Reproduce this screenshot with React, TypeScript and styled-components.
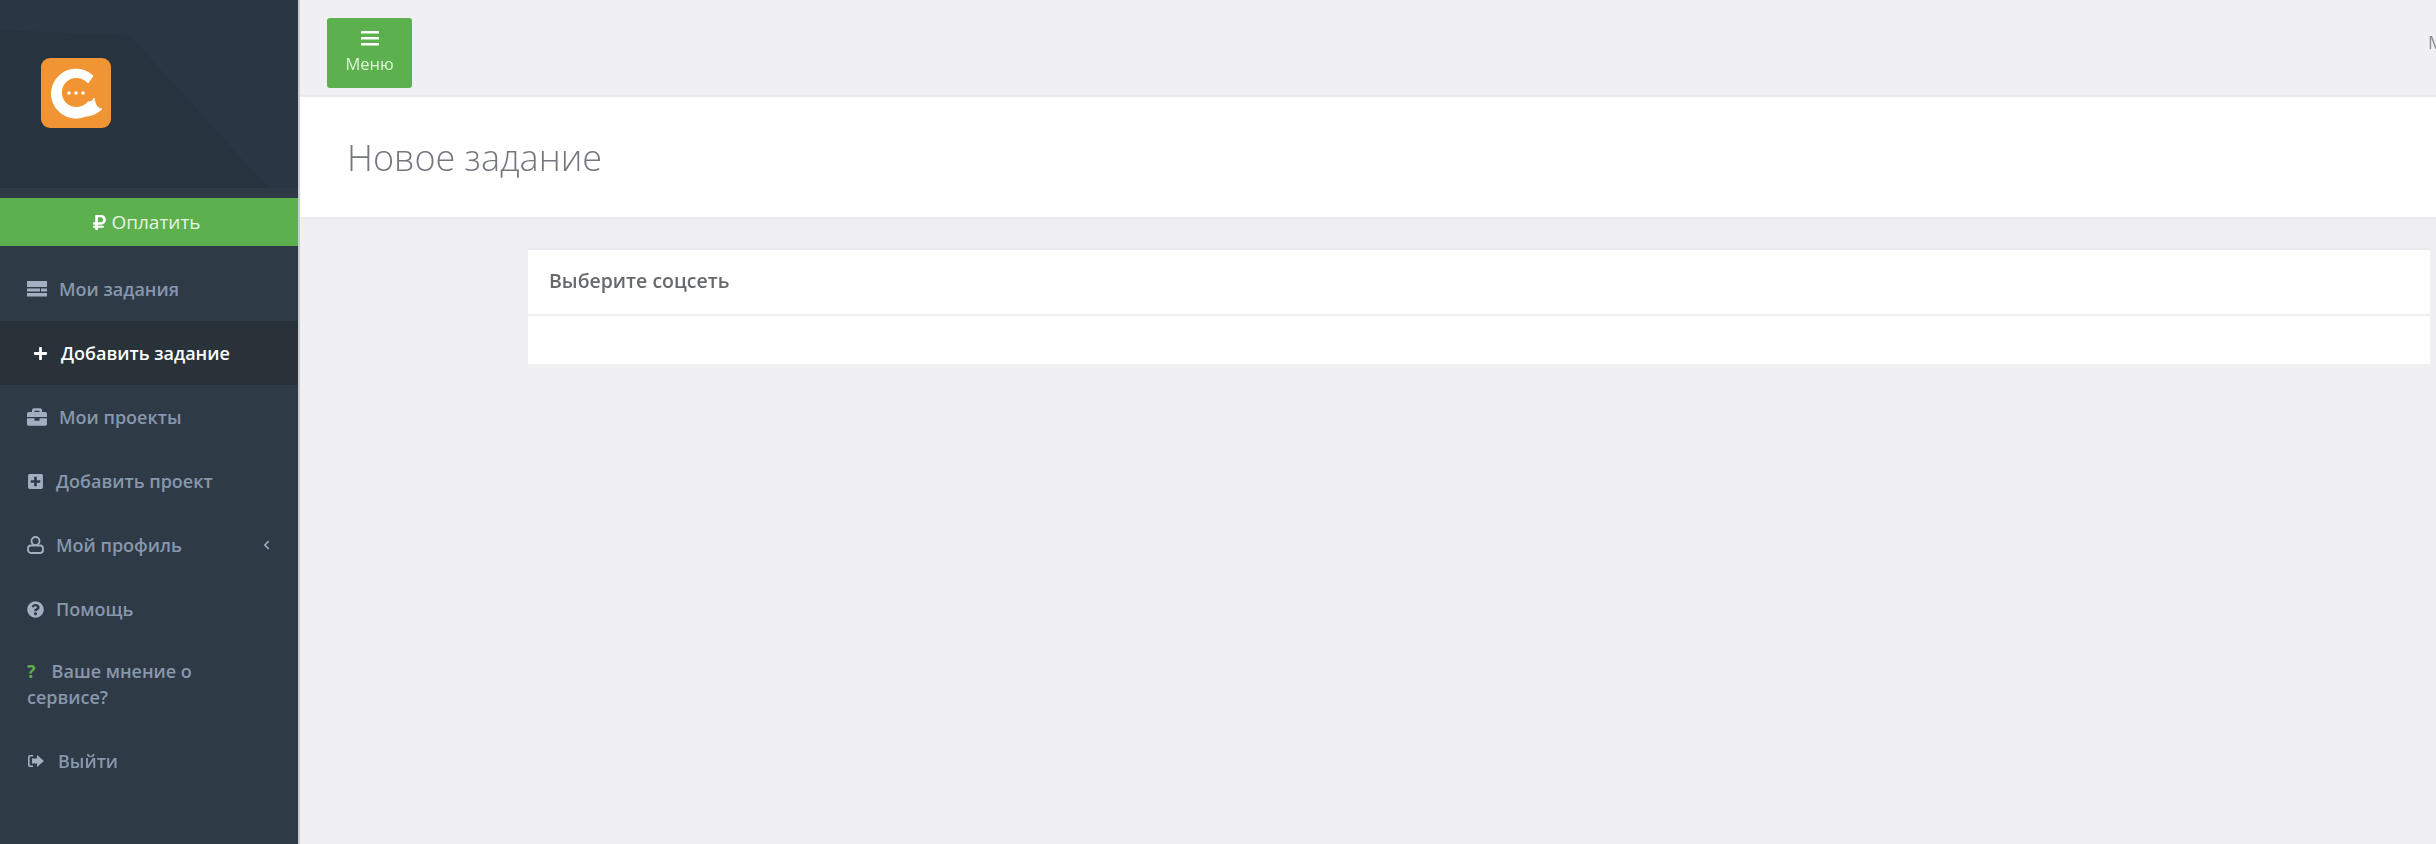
import React from 'react';
import styled, { createGlobalStyle } from 'styled-components';
import {
  FaBriefcase,
  FaPlus,
  FaPlusSquare,
  FaQuestionCircle,
  FaRubleSign,
  FaChevronLeft,
} from 'react-icons/fa';

const GlobalStyle = createGlobalStyle`
  html, body {
    margin: 0;
    padding: 0;
    height: 100%;
    overflow: hidden;
    background: #f0f0f3;
    font-family: "Open Sans", "Liberation Sans", sans-serif;
  }
  #root {
    height: 100%;
  }
`;

const Page = styled.div`
  display: flex;
  width: 2436px;
  height: 844px;
  overflow: hidden;
  filter: blur(0.6px);
`;

const Sidebar = styled.aside`
  flex: 0 0 298px;
  background: #2f3a47;
  border-right: 2px solid #c9ccd1;
  box-sizing: content-box;
  display: flex;
  flex-direction: column;
`;

const LogoArea = styled.div`
  position: relative;
  height: 188px;
  margin-bottom: 10px;
  padding: 58px 0 0 41px;
  box-sizing: border-box;
  background: #2a3643;
`;

const LogoShade = styled.div`
  position: absolute;
  inset: 0;
  background: #27333f;
  clip-path: polygon(0 30px, 130px 36px, 268px 188px, 0 188px);
`;

const LogoMark = styled.svg`
  position: relative;
  display: block;
  width: 70px;
  height: 70px;
`;

const PayBar = styled.div`
  height: 48px;
  padding-right: 5px;
  box-sizing: border-box;
  background: #5cb04e;
  color: #e6f4e2;
  font-size: 19px;
  display: flex;
  align-items: center;
  justify-content: center;
  gap: 4px;
  margin-bottom: 11px;
  svg {
    width: 15px;
    height: 17px;
    color: #ffffff;
  }
`;

const Menu = styled.nav`
  display: flex;
  flex-direction: column;
`;

const MenuItem = styled.a<{ $active?: boolean; $gap?: number }>`
  display: flex;
  align-items: center;
  gap: ${(p) => p.$gap ?? 12}px;
  height: 64px;
  padding: 0 27px;
  box-sizing: border-box;
  font-size: 18px;
  font-weight: 600;
  color: ${(p) => (p.$active ? '#ffffff' : '#8797ac')};
  background: ${(p) => (p.$active ? '#293239' : 'transparent')};
  svg {
    flex-shrink: 0;
    color: ${(p) => (p.$active ? '#ffffff' : '#a3afc0')};
  }
`;

const Caret = styled.span`
  margin-left: auto;
  display: flex;
  svg {
    width: 9px;
    height: 10px;
  }
`;

const OpinionItem = styled.a`
  display: block;
  padding: 17px 27px 19px;
  font-size: 18px;
  font-weight: 600;
  line-height: 26px;
  color: #8797ac;
`;

const OpinionMark = styled.span`
  color: #5cb04e;
  font-weight: 700;
  margin-right: 16px;
`;

const Main = styled.main`
  flex: 1;
  min-width: 0;
  display: flex;
  flex-direction: column;
`;

const TopBar = styled.header`
  height: 95px;
  flex-shrink: 0;
  padding: 18px 0 0 27px;
  box-sizing: border-box;
  display: flex;
  justify-content: space-between;
`;

const MenuButton = styled.button`
  width: 85px;
  height: 70px;
  border: 0;
  border-radius: 3px;
  padding: 13px 0 0;
  background: #5cb04e;
  color: #e0f4da;
  font-family: inherit;
  font-size: 16.5px;
  line-height: 20px;
  display: flex;
  flex-direction: column;
  align-items: center;
  gap: 8px;
`;

const BarsIcon = styled.svg`
  display: block;
  width: 18px;
  height: 15px;
`;

const CutOffLabel = styled.span`
  width: 8px;
  overflow: hidden;
  margin-top: 14px;
  font-size: 18px;
  line-height: 20px;
  color: #8a8d92;
`;

const TitlePanel = styled.div`
  height: 124px;
  flex-shrink: 0;
  box-sizing: border-box;
  background: #ffffff;
  border-top: 2px solid #e9eaed;
  border-bottom: 2px solid #e9eaed;
  display: flex;
  align-items: center;
  padding: 0 0 0 47px;
`;

const PageTitle = styled.h2`
  margin: 0;
  font-size: 36px;
  font-weight: 300;
  color: #74787e;
`;

const Content = styled.section`
  padding: 29px 6px 0 228px;
`;

const Card = styled.div`
  background: #ffffff;
  border-top: 2px solid #e9eaed;
`;

const CardHeader = styled.div`
  height: 64px;
  box-sizing: content-box;
  display: flex;
  align-items: center;
  padding-left: 21px;
  font-size: 19.5px;
  line-height: 24px;
  font-weight: 600;
  color: #676a6c;
  border-bottom: 2px solid #f0f0f3;
  span {
    margin-top: -2px;
  }
`;

const CardBody = styled.div`
  height: 48px;
`;

const TasksIcon = () => (
  <svg width="20" height="16" viewBox="0 0 20 16" fill="currentColor">
    <rect x="0" y="0" width="20" height="6" />
    <rect x="0" y="7.5" width="13" height="3" />
    <rect x="14" y="7.5" width="6" height="3" />
    <rect x="0" y="12" width="20" height="3.5" />
  </svg>
);

const UserOutlineIcon = () => (
  <svg width="17" height="18" viewBox="0 0 17 18" fill="none" stroke="currentColor" strokeWidth="1.8">
    <circle cx="8.5" cy="5" r="4" />
    <rect x="1" y="9.5" width="15" height="7.5" rx="3" />
  </svg>
);

const LogoutIcon = () => (
  <svg width="17" height="14" viewBox="0 0 17 14" fill="currentColor">
    <path d="M6 1H3a2 2 0 0 0-2 2v8a2 2 0 0 0 2 2h3v-1.6H3.4a.8.8 0 0 1-.8-.8V3.4a.8.8 0 0 1 .8-.8H6z" />
    <path d="M10 1l7 6-7 6V9.5H5v-5h5z" />
  </svg>
);

const Logo = () => (
  <LogoMark viewBox="0 0 70 70">
    <rect width="70" height="70" rx="9" fill="#f19534" />
    <path
      d="M52 18 A24.5 24.5 0 1 0 45 58 C51 58 56 55 61 51 C57 51 54 47 53 40 C52 43 50 44 47 44 A15 15 0 1 1 47 25 Z"
      fill="#ffffff"
      stroke="#ffffff"
      strokeWidth="1"
      strokeLinejoin="round"
    />
    <circle cx="28" cy="35" r="1.8" fill="#ffffff" />
    <circle cx="35" cy="35" r="1.8" fill="#ffffff" />
    <circle cx="42" cy="35" r="1.8" fill="#ffffff" />
  </LogoMark>
);

function App() {
  return (
    <>
      <GlobalStyle />
      <Page>
        <Sidebar>
          <LogoArea>
            <LogoShade />
            <Logo />
          </LogoArea>
          <PayBar>
            <FaRubleSign />
            Оплатить
          </PayBar>
          <Menu>
            <MenuItem>
              <TasksIcon />
              Мои задания
            </MenuItem>
            <MenuItem $active $gap={13}>
              <FaPlus size={15} style={{ marginLeft: 6 }} />
              Добавить задание
            </MenuItem>
            <MenuItem>
              <FaBriefcase size={20} />
              Мои проекты
            </MenuItem>
            <MenuItem>
              <FaPlusSquare size={17} />
              Добавить проект
            </MenuItem>
            <MenuItem>
              <UserOutlineIcon />
              Мой профиль
              <Caret>
                <FaChevronLeft />
              </Caret>
            </MenuItem>
            <MenuItem>
              <FaQuestionCircle size={17} />
              Помощь
            </MenuItem>
            <OpinionItem>
              <OpinionMark>?</OpinionMark>
              Ваше мнение о
              <br />
              сервисе?
            </OpinionItem>
            <MenuItem $gap={14}>
              <LogoutIcon />
              Выйти
            </MenuItem>
          </Menu>
        </Sidebar>
        <Main>
          <TopBar>
            <MenuButton>
              <BarsIcon viewBox="0 0 18 15" fill="#ffffff">
                <rect y="0" width="18" height="2.6" rx="0.6" />
                <rect y="6" width="18" height="2.6" rx="0.6" />
                <rect y="12" width="18" height="2.6" rx="0.6" />
              </BarsIcon>
              Меню
            </MenuButton>
            <CutOffLabel>М</CutOffLabel>
          </TopBar>
          <TitlePanel>
            <PageTitle>Новое задание</PageTitle>
          </TitlePanel>
          <Content>
            <Card>
              <CardHeader>
                <span>Выберите соцсеть</span>
              </CardHeader>
              <CardBody />
            </Card>
          </Content>
        </Main>
      </Page>
    </>
  );
}

export default App;
